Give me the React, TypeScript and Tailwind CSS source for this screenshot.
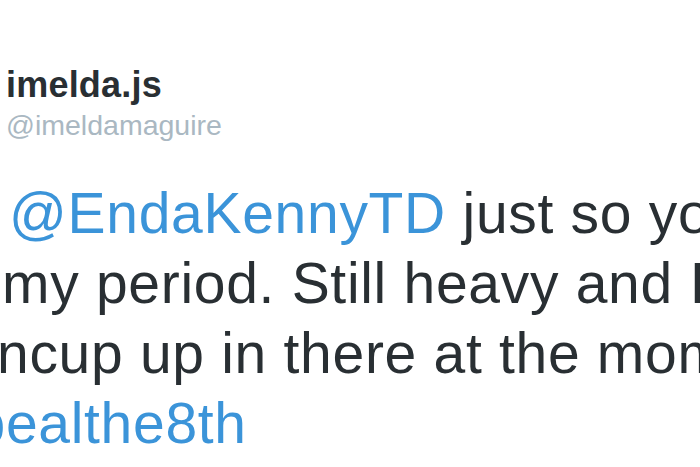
const lines = [
  { offset: "ml-[9px]", parts: [{ text: "@EndaKennyTD", link: true }, { text: " just so you know I'm on" }] },
  { offset: "ml-[2px]", parts: [{ text: "my period. Still heavy and I have a" }] },
  { offset: "ml-[-116px]", parts: [{ text: "mooncup up in there at the moment" }] },
  { offset: "ml-[-111px]", parts: [{ text: "#repealthe8th", link: true }] },
];

export default function App() {
  return (
    <div className="h-[467px] w-[700px] overflow-hidden bg-white font-['Liberation_Sans',Arial,sans-serif] text-[#292f33]">
      <header className="pt-[65px] pl-[6px]">
        <h1 className="text-[36px] leading-[40px] font-bold tracking-[0.2px]">imelda.js</h1>
        <p className="mt-[3px] text-[28.5px] leading-[34px] text-[#aab8c2]">@imeldamaguire</p>
      </header>

      <p className="mt-[36px] text-[57px] leading-[70px] tracking-[0.7px]">
        {lines.map((line, i) => (
          <span key={i} className={`block whitespace-nowrap ${line.offset}`}>
            {line.parts.map((part, j) =>
              part.link ? (
                <span key={j} className="text-[#3b94d9]">
                  {part.text}
                </span>
              ) : (
                <span key={j}>{part.text}</span>
              ),
            )}
          </span>
        ))}
      </p>
    </div>
  );
}
